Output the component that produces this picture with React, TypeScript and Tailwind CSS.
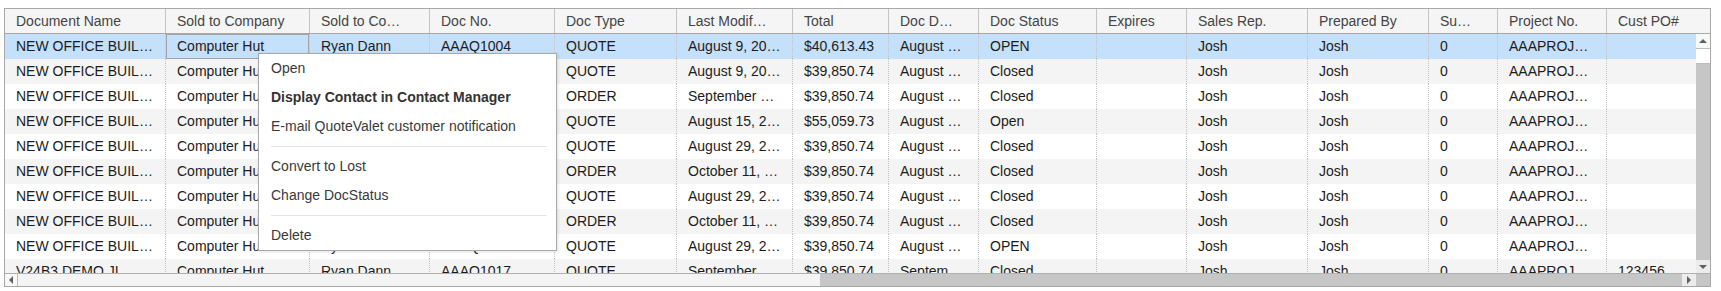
import React from 'react';

const columns = [
  { label: 'Document Name', w: 'w-[161px]' },
  { label: 'Sold to Company', w: 'w-[144px]' },
  { label: 'Sold to Co…', w: 'w-[120px]' },
  { label: 'Doc No.', w: 'w-[125px]' },
  { label: 'Doc Type', w: 'w-[122px]' },
  { label: 'Last Modif…', w: 'w-[116px]' },
  { label: 'Total', w: 'w-[96px]' },
  { label: 'Doc D…', w: 'w-[90px]' },
  { label: 'Doc Status', w: 'w-[118px]' },
  { label: 'Expires', w: 'w-[90px]' },
  { label: 'Sales Rep.', w: 'w-[121px]' },
  { label: 'Prepared By', w: 'w-[121px]' },
  { label: 'Su…', w: 'w-[69px]' },
  { label: 'Project No.', w: 'w-[109px]' },
  { label: 'Cust PO#', w: 'w-[103px]' },
];

const rows: string[][] = [
  ['NEW OFFICE BUIL…', 'Computer Hut', 'Ryan Dann', 'AAAQ1004', 'QUOTE', 'August 9, 20…', '$40,613.43', 'August …', 'OPEN', '', 'Josh', 'Josh', '0', 'AAAPROJ…', ''],
  ['NEW OFFICE BUIL…', 'Computer Hut', 'Ryan Dann', 'AAAQ1005', 'QUOTE', 'August 9, 20…', '$39,850.74', 'August …', 'Closed', '', 'Josh', 'Josh', '0', 'AAAPROJ…', ''],
  ['NEW OFFICE BUIL…', 'Computer Hut', 'Ryan Dann', 'AAAO1005', 'ORDER', 'September …', '$39,850.74', 'August …', 'Closed', '', 'Josh', 'Josh', '0', 'AAAPROJ…', ''],
  ['NEW OFFICE BUIL…', 'Computer Hut', 'Ryan Dann', 'AAAQ1008', 'QUOTE', 'August 15, 2…', '$55,059.73', 'August …', 'Open', '', 'Josh', 'Josh', '0', 'AAAPROJ…', ''],
  ['NEW OFFICE BUIL…', 'Computer Hut', 'Ryan Dann', 'AAAQ1010', 'QUOTE', 'August 29, 2…', '$39,850.74', 'August …', 'Closed', '', 'Josh', 'Josh', '0', 'AAAPROJ…', ''],
  ['NEW OFFICE BUIL…', 'Computer Hut', 'Ryan Dann', 'AAAO1010', 'ORDER', 'October 11, …', '$39,850.74', 'August …', 'Closed', '', 'Josh', 'Josh', '0', 'AAAPROJ…', ''],
  ['NEW OFFICE BUIL…', 'Computer Hut', 'Ryan Dann', 'AAAQ1012', 'QUOTE', 'August 29, 2…', '$39,850.74', 'August …', 'Closed', '', 'Josh', 'Josh', '0', 'AAAPROJ…', ''],
  ['NEW OFFICE BUIL…', 'Computer Hut', 'Ryan Dann', 'AAAO1012', 'ORDER', 'October 11, …', '$39,850.74', 'August …', 'Closed', '', 'Josh', 'Josh', '0', 'AAAPROJ…', ''],
  ['NEW OFFICE BUIL…', 'Computer Hut', 'Ryan Dann', 'AAAQ1015', 'QUOTE', 'August 29, 2…', '$39,850.74', 'August …', 'OPEN', '', 'Josh', 'Josh', '0', 'AAAPROJ…', ''],
  ['V24B3 DEMO JI…', 'Computer Hut', 'Ryan Dann', 'AAAQ1017', 'QUOTE', 'September …', '$39,850.74', 'Septem…', 'Closed', '', 'Josh', 'Josh', '0', 'AAAPROJ…', '123456'],
];

const menuItems = [
  { label: 'Open' },
  { label: 'Display Contact in Contact Manager', bold: true },
  { label: 'E-mail QuoteValet customer notification' },
  { sep: true },
  { label: 'Convert to Lost' },
  { label: 'Change DocStatus' },
  { sep: true },
  { label: 'Delete' },
];

function Arrow({ dir }: { dir: 'up' | 'down' | 'left' | 'right' }) {
  const points = {
    up: '0,5 4,1 8,5',
    down: '0,1 8,1 4,5',
    left: '5,0 5,8 1,4',
    right: '1,0 1,8 5,4',
  }[dir];
  const vertical = dir === 'up' || dir === 'down';
  return (
    <svg width={vertical ? 8 : 6} height={vertical ? 6 : 8} viewBox={vertical ? '0 0 8 6' : '0 0 6 8'}>
      <polygon points={points} fill="#5f5f5f" />
    </svg>
  );
}

function ContextMenu() {
  return (
    <div className="absolute left-[258px] top-[53px] w-[299px] border border-[#a9a9a9] bg-white shadow-[1px_1px_3px_rgba(0,0,0,0.12)]">
      {menuItems.map((item, i) =>
        item.sep ? (
          <div key={i} className="ml-[12px] mr-[9px] my-[5px] h-px bg-[#e4e4e4]" />
        ) : (
          <div
            key={i}
            className={`h-[29px] flex items-center pl-[12px] text-[#3a3a3a] ${item.bold ? 'font-bold text-[#333]' : ''}`}
          >
            {item.label}
          </div>
        )
      )}
    </div>
  );
}

export default function App() {
  return (
    <div className="relative w-[1721px] h-[291px] bg-white pt-[8px] pl-[4px] font-['Liberation_Sans',Arial,sans-serif] text-[14px]">
      <div className="w-[1707px] h-[279px] border border-[#a8a8a8] flex flex-col overflow-hidden">
        {/* header */}
        <div className="h-[25px] shrink-0 flex bg-[#f5f5f5] border-b border-[#a8a8a8] text-[#444]">
          {columns.map((c, i) => (
            <div
              key={c.label}
              className={`${i === columns.length - 1 ? 'flex-1' : `${c.w} shrink-0 border-r border-[#c4c4c4]`} flex items-center pl-[11px] overflow-hidden whitespace-nowrap`}
            >
              {c.label}
            </div>
          ))}
        </div>

        {/* body */}
        <div className="h-[239px] shrink-0 flex">
          <div className="w-[1691px] overflow-hidden">
            {rows.map((r, ri) => (
              <div
                key={ri}
                className={`h-[25px] flex text-[#1c1c1c] ${ri === 0 ? 'bg-[#c4e0fb]' : ri % 2 === 1 ? 'bg-[#f4f4f4]' : 'bg-white'}`}
              >
                {r.map((cell, ci) => (
                  <div
                    key={ci}
                    className={`${columns[ci].w} shrink-0 flex items-center pl-[11px] overflow-hidden whitespace-nowrap border-r border-dotted border-[#c2c2c2] ${ri === 0 && ci === 1 ? 'shadow-[inset_0_0_0_1px_#a2a2a2]' : ''}`}
                  >
                    {cell}
                  </div>
                ))}
              </div>
            ))}
          </div>

          {/* vertical scrollbar */}
          <div className="w-[14px] shrink-0 flex flex-col bg-[#c6c6c6]">
            <div className="h-[14px] flex items-center justify-center bg-[#f8f8f8]">
              <Arrow dir="up" />
            </div>
            <div className="h-[16px] bg-white border-y border-[#bdbdbd]" />
            <div className="flex-1" />
            <div className="h-[13px] flex items-center justify-center bg-[#ececec]">
              <Arrow dir="down" />
            </div>
          </div>
        </div>

        {/* horizontal scrollbar */}
        <div className="h-[13px] shrink-0 flex border-t border-[#b0b0b0] bg-[#c6c6c6]">
          <div className="w-[12px] flex items-center justify-center bg-[#f8f8f8]">
            <Arrow dir="left" />
          </div>
          <div className="w-[803px] bg-[#f4f4f4] border-l border-[#bdbdbd]" />
          <div className="flex-1" />
          <div className="w-[14px] flex items-center justify-center bg-[#ececec]">
            <Arrow dir="right" />
          </div>
          <div className="w-[14px]" />
        </div>
      </div>

      <ContextMenu />
    </div>
  );
}
